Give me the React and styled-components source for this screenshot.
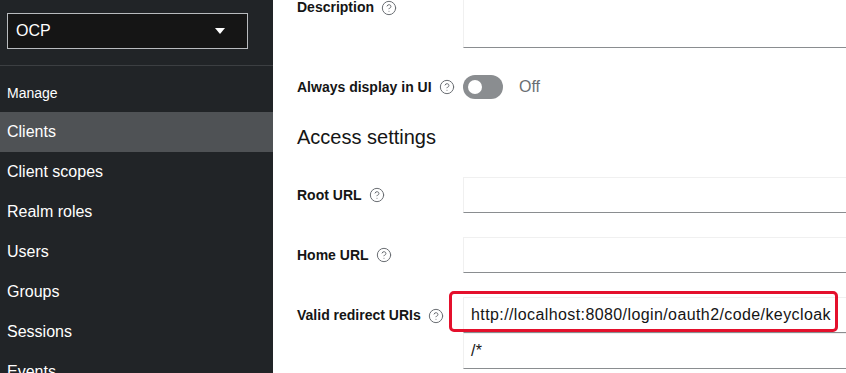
import styled, { createGlobalStyle } from 'styled-components'
import { CircleHelp } from 'lucide-react'

const GlobalStyle = createGlobalStyle`
  html, body {
    margin: 0;
    padding: 0;
    background: #fff;
    overflow: hidden;
  }
  body {
    font-family: 'Liberation Sans', Arial, sans-serif;
  }
`

const Layout = styled.div`
  display: grid;
  grid-template-columns: 273px 1fr;
  width: 846px;
  height: 373px;
  overflow: hidden;
`

const Sidebar = styled.nav`
  background-color: #212427;
  color: #fff;
  display: flex;
  flex-direction: column;
`

const SelectWrap = styled.div`
  padding: 13px 25px 16px 7px;
  border-bottom: 1px solid #3c3f42;
`

const Select = styled.div`
  height: 36px;
  box-sizing: border-box;
  border: 1px solid #b8bbbe;
  background: #151515;
  display: flex;
  align-items: center;
  justify-content: space-between;
  padding: 0 22px 0 8px;
  font-size: 16px;
`

const Caret = styled.span`
  width: 0;
  height: 0;
  border-left: 5px solid transparent;
  border-right: 5px solid transparent;
  border-top: 6px solid #fff;
`

const SectionTitle = styled.div`
  font-size: 14px;
  padding: 18px 7px 10px;
  line-height: 18px;
`

const NavItem = styled.div`
  font-size: 16px;
  height: 40px;
  line-height: 40px;
  padding-left: 7px;
  background: ${(p) => (p.$active ? '#4f5255' : 'transparent')};
`

const Main = styled.main`
  padding: 0 0 0 24px;
  overflow: hidden;
`

const Form = styled.div`
  margin-top: -11px;
  display: flex;
  flex-direction: column;
  gap: 24px;
`

const Row = styled.div`
  display: grid;
  grid-template-columns: 166px 1fr;
  align-items: ${(p) => (p.$top ? 'start' : 'center')};
`

const Label = styled.div`
  font-size: 14px;
  font-weight: 700;
  color: #151515;
  display: flex;
  align-items: center;
  gap: 7px;
  line-height: 21px;
  white-space: nowrap;
  padding-top: ${(p) => (p.$top ? '8px' : '0')};
`

const Help = styled(CircleHelp)`
  color: #6a6e73;
  flex-shrink: 0;
`

const TextArea = styled.div`
  height: 59px;
  box-sizing: border-box;
  border: 1px solid #f0f0f0;
  border-bottom-color: #8a8d90;
  border-right: none;
`

const Input = styled.div`
  height: 36px;
  box-sizing: border-box;
  border: 1px solid #f0f0f0;
  border-bottom-color: #8a8d90;
  border-right: none;
  font-size: 16px;
  letter-spacing: 0.4px;
  color: #151515;
  padding: 0 7px;
  display: flex;
  align-items: center;
  white-space: nowrap;
`

const Stack = styled.div`
  position: relative;
  display: flex;
  flex-direction: column;
`

const Highlight = styled.div`
  position: absolute;
  left: -14px;
  top: -6px;
  width: 389px;
  height: 41px;
  box-sizing: border-box;
  border: 3px solid #e4102c;
  border-radius: 5px;
  pointer-events: none;
`

const SwitchRow = styled.div`
  display: flex;
  align-items: center;
  gap: 16px;
  padding: 3px 0;
`

const Switch = styled.div`
  width: 40px;
  height: 24px;
  border-radius: 12px;
  background: #8a8d90;
  display: flex;
  align-items: center;
  padding-left: 5px;
  box-sizing: border-box;
`

const Knob = styled.div`
  width: 14px;
  height: 14px;
  border-radius: 50%;
  background: #fff;
`

const SwitchText = styled.span`
  font-size: 16px;
  color: #6a6e73;
`

const Heading = styled.h2`
  margin: -4px 0 0;
  font-size: 20px;
  font-weight: 400;
  line-height: 31px;
  color: #151515;
`

const navItems = ['Clients', 'Client scopes', 'Realm roles', 'Users', 'Groups', 'Sessions', 'Events']

function FieldLabel({ children, top }) {
  return (
    <Label $top={top}>
      {children}
      <Help size={16} strokeWidth={1.5} />
    </Label>
  )
}

export default function App() {
  return (
    <>
      <GlobalStyle />
      <Layout>
        <Sidebar>
          <SelectWrap>
            <Select>
              <span>OCP</span>
              <Caret />
            </Select>
          </SelectWrap>
          <SectionTitle>Manage</SectionTitle>
          {navItems.map((item) => (
            <NavItem key={item} $active={item === 'Clients'}>
              {item}
            </NavItem>
          ))}
        </Sidebar>
        <Main>
          <Form>
            <Row $top>
              <FieldLabel top>Description</FieldLabel>
              <TextArea />
            </Row>
            <Row>
              <FieldLabel>Always display in UI</FieldLabel>
              <SwitchRow>
                <Switch>
                  <Knob />
                </Switch>
                <SwitchText>Off</SwitchText>
              </SwitchRow>
            </Row>
            <Heading>Access settings</Heading>
            <Row>
              <FieldLabel>Root URL</FieldLabel>
              <Input />
            </Row>
            <Row>
              <FieldLabel>Home URL</FieldLabel>
              <Input />
            </Row>
            <Row $top>
              <FieldLabel top>Valid redirect URIs</FieldLabel>
              <Stack>
                <Input>http://localhost:8080/login/oauth2/code/keycloak</Input>
                <Input>/*</Input>
                <Highlight />
              </Stack>
            </Row>
          </Form>
        </Main>
      </Layout>
    </>
  )
}
